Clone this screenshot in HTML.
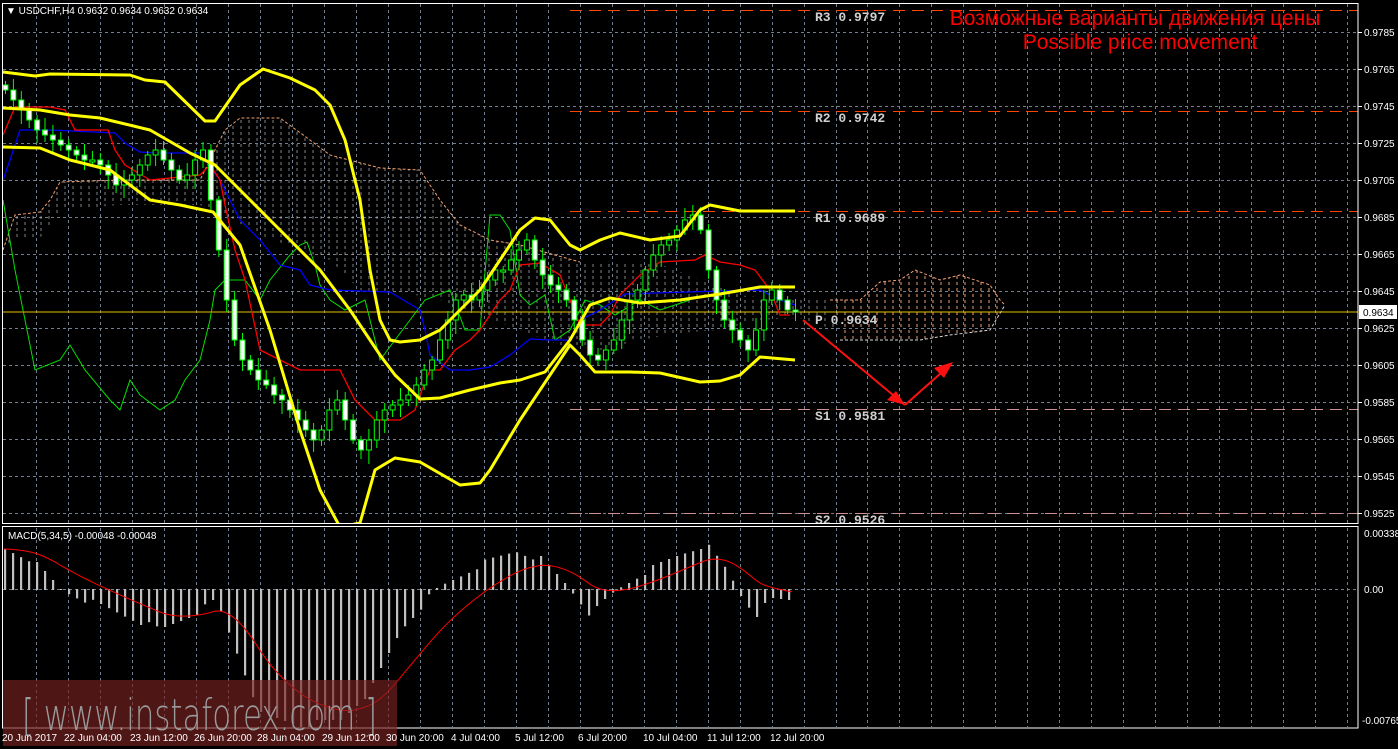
<!DOCTYPE html>
<html><head><meta charset="utf-8"><style>
html,body{margin:0;padding:0;background:#000;overflow:hidden}
svg{display:block}
text{font-family:"Liberation Sans",sans-serif}
</style></head><body>
<svg id="s" width="1398" height="749" xmlns="http://www.w3.org/2000/svg">
<defs>
<pattern id="hatchW" width="8" height="6" patternUnits="userSpaceOnUse"><line x1="1" y1="0" x2="1" y2="3" stroke="#d8d8d8" stroke-width="1"/></pattern>
<pattern id="hatchO" width="8" height="6" patternUnits="userSpaceOnUse"><line x1="5" y1="0" x2="5" y2="3" stroke="#f0a070" stroke-width="1"/></pattern>
<clipPath id="mainc"><rect x="3" y="4" width="1355" height="520"/></clipPath>
<clipPath id="macc"><rect x="3" y="528" width="1355" height="200"/></clipPath>
</defs>
<rect width="1398" height="749" fill="#000"/>
<g id="grid"></g>
<g clip-path="url(#mainc)">
<polygon points="3,250 15,215 40,212 50,200 60,182 120,180 200,180 225,130 240,118 280,118 310,140 330,155 380,168 420,170 440,200 460,225 490,240 520,245 555,255 580,262 620,262 660,264 700,280 740,295 780,300 830,300 835,330 800,318 760,320 720,330 680,333 640,340 600,350 560,345 520,330 480,315 440,300 400,292 360,290 330,260 300,250 260,235 225,215 200,205 120,205 60,210 40,238 15,240" fill="url(#hatchW)" opacity="0.6"/>
<polyline points="3,250 15,215 40,212 50,200 60,182 120,180 200,180 225,130 240,118 280,118 310,140 330,155 380,168 420,170 440,200 460,225 490,240 520,245 555,255 580,262" fill="none" stroke="#f0a070" stroke-dasharray="3,2" stroke-width="1"/>
<polygon points="830,300 860,300 880,282 900,280 915,270 940,280 960,275 990,285 1000,300 1005,305 990,330 950,335 920,340 875,340 845,340 835,320" fill="url(#hatchO)"/>
<polyline points="830,300 860,300 880,282 900,280 915,270 940,280 960,275 990,285 1000,300 1005,305" fill="none" stroke="#f0a070" stroke-dasharray="3,2"/>
<polyline points="840,340 875,340 920,340 950,335 990,330 1005,305" fill="none" stroke="#d8d8d8" stroke-dasharray="3,2"/>
<g id="piv"></g>
<line x1="3" y1="312" x2="1358" y2="312" stroke="#e6c000" stroke-width="1"/>
<polyline fill="none" stroke="#00e000" stroke-width="1" points="3,200 15,270 35,370 60,360 70,345 85,370 110,400 120,410 130,380 140,395 160,410 175,400 185,380 200,360 210,320 215,290 225,280 245,280 260,300 270,280 290,255 300,245 307,242 315,265 320,285 330,300 345,310 365,300 380,360 395,340 410,320 425,300 450,290 465,330 480,330 490,215 500,215 510,230 520,295 530,305 545,295 555,340 570,330 585,300 600,305 615,315 640,300 660,310 690,300"/>
<polyline fill="none" stroke="#0000ff" stroke-width="1.3" points="3,180 10,160 20,130 50,130 115,133 125,143 140,152 155,153 200,153 220,180 230,200 240,220 260,240 280,265 300,270 310,285 330,290 390,292 420,310 425,330 430,355 450,370 470,370 490,367 510,355 530,339 550,340 570,340 580,320 600,310 625,294 655,293 720,291 760,290 780,300 795,305"/>
<polyline fill="none" stroke="#ff0000" stroke-width="1.3" points="3,135 15,107 50,107 65,110 75,130 108,130 115,150 125,165 150,180 200,175 210,165 220,180 225,205 235,250 245,280 260,350 300,370 340,370 355,400 375,420 400,420 415,410 420,395 430,370 440,370 455,350 470,340 480,330 500,300 510,290 520,265 540,263 560,275 580,325 600,325 610,315 620,295 640,275 660,262 695,260 705,255 720,262 740,265 755,270 770,290 780,315 790,315"/>
<g id="candles"></g>
<g fill="none" stroke="#ffff00" stroke-width="3" stroke-linejoin="round">
<polyline points="3,72 35,76 50,74 130,75 145,80 165,82 205,121 215,121 240,85 263,69 290,78 315,90 330,105 345,140 360,200 370,270 380,320 390,340 400,342 420,340 440,330 460,310 480,290 500,260 520,230 535,218 550,220 570,245 580,250 600,240 620,233 650,240 680,236 700,210 710,205 740,211 795,211"/>
<polyline points="3,108 40,110 70,115 100,118 150,130 190,153 215,165 240,190 280,230 320,270 350,310 380,355 395,375 420,399 440,398 470,390 500,383 520,380 545,372 570,340 590,305 610,298 640,303 680,300 720,294 760,287 795,287"/>
<polyline points="3,147 40,148 70,160 110,170 150,200 180,205 213,212 240,245 270,330 300,430 320,490 340,527 360,523 375,470 395,458 420,462 460,485 480,483 490,470 520,420 550,375 570,345 580,355 595,372 630,372 660,373 700,382 720,381 740,375 760,357 795,360"/>
</g>
</g>
<rect x="2.5" y="3.5" width="1355.5" height="520" fill="none" stroke="#fff" stroke-width="1"/>
<rect x="2.5" y="526.5" width="1355.5" height="201.5" fill="none" stroke="#fff" stroke-width="1"/>
<g clip-path="url(#macc)">
<g id="macd"></g>
</g>
<rect x="3" y="680" width="394" height="66" fill="#7a2222" opacity="0.65"/>
<text x="22" y="730" font-size="44" fill="#9a9a9a" style="font-family:'DejaVu Sans',sans-serif;font-weight:200" textLength="355" lengthAdjust="spacingAndGlyphs">[ www.instaforex.com ]</text>
<g stroke="#ff1010" stroke-width="2" fill="none">
<line x1="803" y1="320" x2="905" y2="405"/>
<line x1="905" y1="405" x2="950" y2="365"/>
</g>
<polygon points="905,405 887,400 896,391" fill="#ff1010"/>
<polygon points="953,362 934,368 944,378" fill="#ff1010"/>
<text x="6" y="14" font-size="10" fill="#fff">▼ USDCHF,H4  0.9632 0.9634 0.9632 0.9634</text>
<text x="8" y="539" font-size="10" fill="#fff">MACD(5,34,5) -0.00048 -0.00048</text>
<text x="1135" y="25" font-size="21" fill="#ff0000" text-anchor="middle">Возможные варианты движения цены</text>
<text x="1140" y="49" font-size="21" fill="#ff0000" text-anchor="middle">Possible price movement</text>
<g id="axis" font-size="10" fill="#fff"></g>
<rect x="1359" y="305" width="38" height="14" fill="#fff"/>
<text x="1363" y="316" font-size="10" fill="#000">0.9634</text>
</svg>
<script>
(function(){
var NS="http://www.w3.org/2000/svg";
function el(p,t,a,txt){var e=document.createElementNS(NS,t);for(var k in a)e.setAttribute(k,a[k]);if(txt!=null)e.textContent=txt;document.getElementById(p).appendChild(e);return e;}
for(var x=36;x<1358;x+=31.98){var gx=Math.round(x)+.5;el('grid','line',{x1:gx,y1:4,x2:gx,y2:523,stroke:'#6f7f90','stroke-dasharray':'3,3'});el('grid','line',{x1:gx,y1:528,x2:gx,y2:727,stroke:'#6f7f90','stroke-dasharray':'3,3'});}
for(var k=0;k<14;k++){var y=32+37*k;el('grid','line',{x1:3,y1:y+.5,x2:1358,y2:y+.5,stroke:'#6f7f90','stroke-dasharray':'3,3'});
var p=(0.9785-0.002*k).toFixed(4);el('axis','line',{x1:1358,y1:y+.5,x2:1362,y2:y+.5,stroke:'#fff'});el('axis','text',{x:1364,y:y+4},p);}
el('grid','line',{x1:3,y1:589.5,x2:1358,y2:589.5,stroke:'#6f7f90','stroke-dasharray':'3,3'});
el('axis','text',{x:1364,y:537},'0.00338');el('axis','text',{x:1364,y:593},'0.00');el('axis','text',{x:1362,y:724},'-0.00765');
var tl=[['20 Jun 2017',2],['22 Jun 04:00',64],['23 Jun 12:00',130],['26 Jun 20:00',194],['28 Jun 04:00',257],['29 Jun 12:00',322],['30 Jun 20:00',386],['4 Jul 04:00',451],['5 Jul 12:00',515],['6 Jul 20:00',578],['10 Jul 04:00',643],['11 Jul 12:00',707],['12 Jul 20:00',770]];
tl.forEach(function(t){el('axis','text',{x:t[1],y:741},t[0]);});
var pv=[['R3 0.9797',10,'#ff4500'],['R2 0.9742',111,'#ff4500'],['R1 0.9689',211,'#ff4500'],['S1 0.9581',409,'#d09090'],['S2 0.9526',513,'#d09090']];
pv.forEach(function(q){el('piv','line',{x1:570,y1:q[1]+.5,x2:1358,y2:q[1]+.5,stroke:q[2],'stroke-dasharray':'12,7'});
el('piv','text',{x:815,y:q[1]+11,'font-size':13,fill:'#d0d0d0','font-weight':'bold',style:'font-family:Liberation Mono,monospace'},q[0]);});
el('piv','text',{x:815,y:324,'font-size':13,fill:'#d0d0d0','font-weight':'bold',style:'font-family:Liberation Mono,monospace'},'P  0.9634');
var c=[90,100,110,120,130,135,140,145,150,155,160,160,165,175,185,180,175,165,155,150,160,170,180,175,160,150,200,250,300,340,360,370,380,385,395,400,410,420,430,440,430,410,400,420,440,450,440,420,410,405,400,395,385,370,360,340,320,300,295,300,290,280,270,270,260,250,240,260,275,285,290,300,320,340,355,360,350,340,320,300,290,270,255,245,240,230,220,215,230,270,300,320,330,340,350,330,300,290,300,310,312];
var prev=85;
for(var i=0;i<c.length;i++){var cx=5+i*7.9;var o=prev,cl=c[i];var tp=Math.min(o,cl),bt=Math.max(o,cl);if(bt-tp<2)bt=tp+2;
var hi=tp-4-(i*7%9),lo=bt+4+(i*5%11);
el('candles','line',{x1:cx+.5,y1:hi,x2:cx+.5,y2:lo,stroke:'#00ff00'});
el('candles','rect',{x:cx-2,y:tp,width:5,height:bt-tp,fill:(cl>o?'#fff':'#000'),stroke:'#00ff00'});prev=cl;}
var kp=[[4,40],[30,30],[60,0],[110,-20],[160,-40],[200,-20],[215,-10],[235,-60],[260,-125],[300,-135],[340,-130],[370,-100],[400,-40],[430,-5],[445,5],[480,25],[515,38],[540,30],[570,0],[590,-25],[610,-5],[640,15],[680,35],[705,45],[725,20],[740,-5],[755,-25],[770,-10],[795,-10]];
function f(x){for(var i=0;i<kp.length-1;i++){if(x>=kp[i][0]&&x<=kp[i+1][0]){var t=(x-kp[i][0])/(kp[i+1][0]-kp[i][0]);return kp[i][1]+t*(kp[i+1][1]-kp[i][1]);}}return 0;}
for(var mx=4;mx<=795;mx+=8){var v=f(mx)+((mx*13)%7-3);var y1=589-v;el('macd','rect',{x:mx,y:Math.min(589,y1),width:2.2,height:Math.abs(v)+1,fill:'#c0c0c0'});}
var pts=[];var s=f(4);for(var sx=4;sx<=795;sx+=4){s=s+(f(sx)-s)*0.09;pts.push(sx+','+(589-s).toFixed(1));}
el('macd','polyline',{points:pts.join(' '),fill:'none',stroke:'#ff0000','stroke-width':1});
})();
</script>
</body></html>
